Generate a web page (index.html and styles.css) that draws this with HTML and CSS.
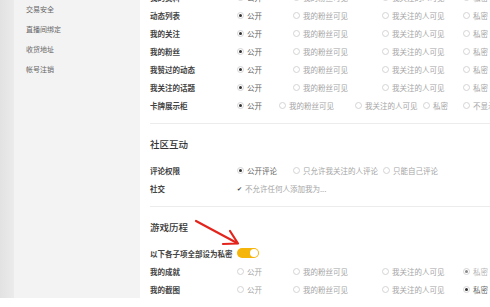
FILE: index.html
```html
<!DOCTYPE html>
<html lang="zh-CN">
<head>
    <meta charset="UTF-8">
    <meta name="viewport" content="width=device-width, initial-scale=1.0">
    <title>隐私设置</title>
    <link rel="stylesheet" href="styles.css">
</head>
<body>
    <div class="page">
        <div class="edge"></div>
        <aside class="sidebar">
            <a class="side-item">交易安全</a>
            <a class="side-item">直播间绑定</a>
            <a class="side-item">收货地址</a>
            <a class="side-item">帐号注销</a>
        </aside>

        <main class="main">
            <section class="group group-first">
                <div class="row">
                    <span class="label">我的资料</span>
                    <div class="opts opts-4">
                        <label class="opt is-on"><i class="radio"></i>公开</label>
                        <label class="opt"><i class="radio"></i>我的粉丝可见</label>
                        <label class="opt"><i class="radio"></i>我关注的人可见</label>
                        <label class="opt"><i class="radio"></i>私密</label>
                    </div>
                </div>
                <div class="row">
                    <span class="label">动态列表</span>
                    <div class="opts opts-4">
                        <label class="opt is-on"><i class="radio"></i>公开</label>
                        <label class="opt"><i class="radio"></i>我的粉丝可见</label>
                        <label class="opt"><i class="radio"></i>我关注的人可见</label>
                        <label class="opt"><i class="radio"></i>私密</label>
                    </div>
                </div>
                <div class="row">
                    <span class="label">我的关注</span>
                    <div class="opts opts-4">
                        <label class="opt is-on"><i class="radio"></i>公开</label>
                        <label class="opt"><i class="radio"></i>我的粉丝可见</label>
                        <label class="opt"><i class="radio"></i>我关注的人可见</label>
                        <label class="opt"><i class="radio"></i>私密</label>
                    </div>
                </div>
                <div class="row">
                    <span class="label">我的粉丝</span>
                    <div class="opts opts-4">
                        <label class="opt is-on"><i class="radio"></i>公开</label>
                        <label class="opt"><i class="radio"></i>我的粉丝可见</label>
                        <label class="opt"><i class="radio"></i>我关注的人可见</label>
                        <label class="opt"><i class="radio"></i>私密</label>
                    </div>
                </div>
                <div class="row">
                    <span class="label">我赞过的动态</span>
                    <div class="opts opts-4">
                        <label class="opt is-on"><i class="radio"></i>公开</label>
                        <label class="opt"><i class="radio"></i>我的粉丝可见</label>
                        <label class="opt"><i class="radio"></i>我关注的人可见</label>
                        <label class="opt"><i class="radio"></i>私密</label>
                    </div>
                </div>
                <div class="row">
                    <span class="label">我关注的话题</span>
                    <div class="opts opts-4">
                        <label class="opt is-on"><i class="radio"></i>公开</label>
                        <label class="opt"><i class="radio"></i>我的粉丝可见</label>
                        <label class="opt"><i class="radio"></i>我关注的人可见</label>
                        <label class="opt"><i class="radio"></i>私密</label>
                    </div>
                </div>
                <div class="row">
                    <span class="label">卡牌展示柜</span>
                    <div class="opts opts-5">
                        <label class="opt is-on"><i class="radio"></i>公开</label>
                        <label class="opt"><i class="radio"></i>我的粉丝可见</label>
                        <label class="opt"><i class="radio"></i>我关注的人可见</label>
                        <label class="opt"><i class="radio"></i>私密</label>
                        <label class="opt"><i class="radio"></i>不显示</label>
                    </div>
                </div>
            </section>

            <section class="group">
                <h3 class="group-title">社区互动</h3>
                <div class="row">
                    <span class="label">评论权限</span>
                    <div class="opts opts-3">
                        <label class="opt is-on"><i class="radio"></i>公开评论</label>
                        <label class="opt"><i class="radio"></i>只允许我关注的人评论</label>
                        <label class="opt"><i class="radio"></i>只能自己评论</label>
                    </div>
                </div>
                <div class="row">
                    <span class="label">社交</span>
                    <div class="opts">
                        <label class="opt"><i class="check">&#10004;</i>不允许任何人添加我为...</label>
                    </div>
                </div>
            </section>

            <section class="group group-last">
                <h3 class="group-title">游戏历程</h3>
                <div class="row">
                    <span class="label">以下各子项全部设为私密</span>
                    <div class="opts">
                        <span class="toggle is-on"><i class="knob"></i></span>
                    </div>
                </div>
                <div class="row">
                    <span class="label">我的成就</span>
                    <div class="opts opts-4">
                        <label class="opt"><i class="radio"></i>公开</label>
                        <label class="opt"><i class="radio"></i>我的粉丝可见</label>
                        <label class="opt"><i class="radio"></i>我关注的人可见</label>
                        <label class="opt is-on is-faded"><i class="radio"></i>私密</label>
                    </div>
                </div>
                <div class="row">
                    <span class="label">我的截图</span>
                    <div class="opts opts-4">
                        <label class="opt"><i class="radio"></i>公开</label>
                        <label class="opt"><i class="radio"></i>我的粉丝可见</label>
                        <label class="opt"><i class="radio"></i>我关注的人可见</label>
                        <label class="opt is-on"><i class="radio"></i>私密</label>
                    </div>
                </div>
            </section>
        </main>

        <!-- annotation arrow drawn over the screenshot -->
        <svg class="arrow" viewBox="0 0 490 298" width="490" height="298">
            <path d="M196 221 L237 243" stroke="#e3241c" stroke-width="2.2" stroke-linecap="round" fill="none"/>
            <path d="M223 244 L238 243.5 L230 231" stroke="#e3241c" stroke-width="2.2" stroke-linecap="round" stroke-linejoin="round" fill="none"/>
        </svg>
    </div>
</body>
</html>
```

FILE: styles.css
```css
body {
    margin: 0;
    background-color: #fff;
    font-family: "Noto Sans CJK SC", "Noto Sans", sans-serif;
}
.page {
    position: relative;
    display: flex;
    height: 298px;
    overflow: hidden;
}
.edge {
    width: 14px;
    flex-shrink: 0;
    background: linear-gradient(to right, #e2e2e2, #ebebeb);
}
.sidebar {
    width: 126px;
    flex-shrink: 0;
    background-color: #f3f3f3;
    padding-left: 12px;
    box-sizing: border-box;
    display: flex;
    flex-direction: column;
    margin-top: -1px;
}
.side-item {
    height: 20px;
    line-height: 20px;
    font-size: 7px;
    color: #666;
}
.main {
    flex: 1;
    min-width: 0;
    padding-left: 10px;
    overflow: hidden;
}
.group {
    border-bottom: 1px solid #ececec;
    padding: 13px 0 9px;
}
.group-first {
    padding-top: 0;
    margin-top: -12px;
}
.group-last {
    border-bottom: none;
}
.group-title {
    margin: 0 0 10px;
    height: 14px;
    line-height: 14px;
    font-size: 9.5px;
    font-weight: 500;
    color: #333;
}
.row {
    display: flex;
    align-items: center;
    height: 18px;
    white-space: nowrap;
}
.label {
    width: 87px;
    flex-shrink: 0;
    font-size: 7.5px;
    font-weight: 700;
    color: #444;
}
.opts {
    display: grid;
    grid-auto-flow: column;
    justify-content: start;
    align-items: center;
}
.opts-4 {
    grid-template-columns: 56px 89px 81px auto;
}
.opts-5 {
    grid-template-columns: 42px 76px 68px 40px auto;
}
.opts-3 {
    grid-template-columns: 56px 90px auto;
}
.opt {
    display: inline-flex;
    align-items: center;
    font-size: 7.5px;
    color: #a5a5a5;
}
.opt.is-on {
    color: #666;
}
.opt.is-faded {
    color: #b5b5b5;
}
.radio {
    width: 7px;
    height: 7px;
    border: 1px solid #d4d4d4;
    border-radius: 50%;
    box-sizing: border-box;
    margin-right: 3px;
    display: inline-flex;
    align-items: center;
    justify-content: center;
}
.opt.is-on .radio::after {
    content: '';
    width: 3px;
    height: 3px;
    border-radius: 50%;
    background-color: #333;
}
.opt.is-faded .radio::after {
    background-color: #888;
}
.check {
    font-style: normal;
    font-size: 6px;
    color: #444;
    margin-right: 3px;
}
.toggle {
    width: 22px;
    height: 10px;
    border-radius: 5px;
    background-color: #f5b50a;
    display: flex;
    align-items: center;
    justify-content: flex-end;
    padding: 0 1px;
    box-sizing: border-box;
}
.knob {
    width: 8px;
    height: 8px;
    border-radius: 50%;
    background-color: #fff;
}
.arrow {
    position: absolute;
    left: 0;
    top: 0;
    pointer-events: none;
}
```
